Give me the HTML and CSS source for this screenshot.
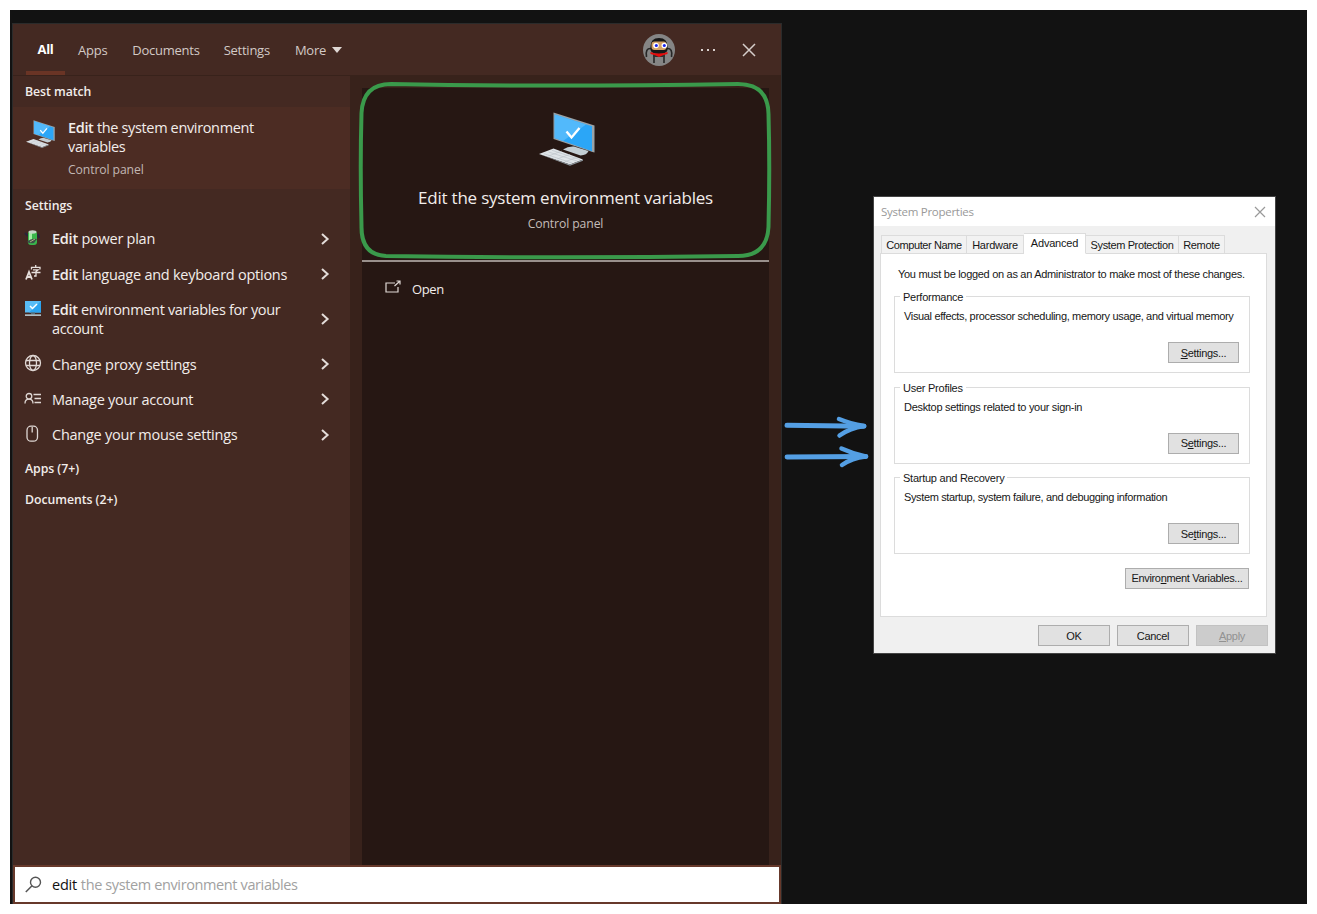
FILE: index.html
```html
<!DOCTYPE html>
<html lang="en">
<head>
<meta charset="utf-8">
<title>Edit the system environment variables</title>
<link rel="stylesheet" href="styles.css">
</head>
<body>
<svg class="defs" width="0" height="0">
  <symbol id="chev" viewBox="0 0 10 14"><path d="M2 2l5.600 5L2 12" fill="none" stroke="#e4dcd9" stroke-width="2"/></symbol>
  <symbol id="pc" viewBox="0 0 56 54">
    <path d="M14.500 0.500L55.500 13.500V40.500L53.500 40L14.500 27z" fill="#9aa3a8"/>
    <path d="M15.700 2.500L53 14.300V39.300L15.700 26z" fill="#2ba6f7"/>
    <path d="M15.700 2.500L47 12.400L24 28.900L15.700 26z" fill="#52b9fb"/>
    <path d="M27.500 19.500l5 6 8-9.500" fill="none" stroke="#fff" stroke-width="2.400"/>
    <path d="M24 37.500q5-3.500 11-3l14.500 4.500q-1.500 4-8 4.500z" fill="#c3ced4"/>
    <path d="M0 42l14.500-5.500L44 47.500 31 52.500z" fill="#dfe4e8"/>
    <path d="M5 41.700L33 51M9.500 40L38 49M13 38.300L41 47.700M9 44.200l13.500-5M18 47l13-4.700M26 49.700l12-4.400" fill="none" stroke="#b9c0c6" stroke-width=".6"/>
    <path d="M0 42l31 10.500 13-5v1.300L31 53.800z" fill="#8e979d"/>
  </symbol>
</svg>
<main class="canvas">
  <section class="search">
    <header class="tabs">
      <span class="tab on"><b>All</b></span><span class="tab">Apps</span><span class="tab docs">Documents</span><span class="tab sets">Settings</span><span class="tab more">More<i class="caret"></i></span>
      <svg class="avatar" viewBox="0 0 32 32"><circle cx="16" cy="16" r="16" fill="#858585"/>
        <path d="M8 14.500Q2 14 3.500 23M24 14.500q6-.5 4.500 8.500M11 22v7M21 22v7" fill="none" stroke="#262626" stroke-width="1.600"/>
        <path d="M10 20h12v3H10z" fill="#303030"/>
        <path d="M7.500 13Q7.500 4 16 4t8.500 9v3q-1 4-8.500 4t-8.500-4z" fill="#171717"/>
        <rect x="8.500" y="7.500" width="15" height="8.500" rx="3" fill="#d3a269"/>
        <circle cx="13" cy="11.500" r="2.800" fill="#fff"/><circle cx="21.300" cy="11.500" r="2.800" fill="#fff"/><circle cx="13.300" cy="11.500" r="1.500" fill="#1722ee"/><circle cx="21.300" cy="11.500" r="1.500" fill="#1722ee"/>
        <path d="M7.500 18q8.500 3 17 0v2q-5 1-8.500 3-3.500-2-8.500-3z" fill="#e60b0b"/></svg>
      <svg class="dots" viewBox="0 0 16 4"><path d="M1 1h2v2H1zM7 1h2v2H7zM13 1h2v2h-2z" fill="#d8d0cd"/></svg>
      <svg class="close" viewBox="0 0 14 14"><path d="M1 1l12 12M13 1L1 13" stroke="#d5cdca" stroke-width="1.500"/></svg>
    </header>
    <div class="body">
      <div class="results">
        <h2 class="first">Best match</h2>
        <div class="best">
          <svg class="bicon"><use href="#pc"/></svg>
          <div><p class="btitle"><b>Edit</b> the system environment<br>variables</p><p class="sub">Control panel</p></div>
        </div>
        <h2 class="second">Settings</h2>
        <div class="row"><svg class="ic" viewBox="0 0 18 18"><path d="M1 4l3 3M14 5l1 4" stroke="#29243b" stroke-width="2"/><rect x="4" y="2" width="9" height="14" rx="3" fill="#39b64b"/><rect x="5" y="3" width="3" height="9" fill="#a1eda2"/><ellipse cx="8.500" cy="3" rx="4" ry="1.700" fill="#c5d5c7"/><path d="M3 13q4-4 10-3l-3 4q-4 1-7-1z" fill="#3d5148"/><path d="M6 13l5-3" stroke="#b2ad80"/></svg><span><b>Edit</b> power plan</span><svg class="chev"><use href="#chev"/></svg></div>
        <div class="row"><svg class="ic" viewBox="0 0 18 18"><path d="M2 15.500L5 8 8 15.500M3 13h4" fill="none" stroke="#e6dfdc" stroke-width="1.800"/><path d="M7.500 5.500V3.300h8.500v2.200M11.700 1v2.300M9 5.800h5L12 7.500V12h-2M7.500 8.500h9" fill="none" stroke="#e6dfdc" stroke-width="1.300"/></svg><span><b>Edit</b> language and keyboard options</span><svg class="chev"><use href="#chev"/></svg></div>
        <div class="row two"><svg class="ic" viewBox="0 0 18 18"><path d="M1 1h16v11.500H1z" fill="#58bbf5"/><path d="M17 1v11.500H5z" fill="#2ba3ef"/><path d="M6 6l2.500 2.500L13 4" fill="none" stroke="#fff" stroke-width="1.500"/><path d="M7 12.500h4v2H7z" fill="#526c79"/><path d="M1 14.300h16v1.700H1z" fill="#afbcc2"/></svg><span class="e3"><b>Edit</b> environment variables for your<br>account</span><svg class="chev"><use href="#chev"/></svg></div>
        <div class="row"><svg class="ic ln" viewBox="0 0 18 18"><circle cx="9" cy="9" r="7.500"/><ellipse cx="9" cy="9" rx="3.500" ry="7.500"/><path d="M2 6.500h14M2 11.500h14"/></svg><span>Change proxy settings</span><svg class="chev"><use href="#chev"/></svg></div>
        <div class="row"><svg class="ic ln" viewBox="0 0 18 18"><circle cx="5" cy="6.300" r="2.800"/><path d="M1 13.500q0-4.300 4-4.300t4 4.300M9.500 4.500H17M10.500 8.500H17M10.500 12.500H17"/></svg><span>Manage your account</span><svg class="chev"><use href="#chev"/></svg></div>
        <div class="row"><svg class="ic ln" viewBox="0 0 18 18"><rect x="3" y="1.200" width="10.500" height="15" rx="4"/><path d="M8.200 2v5.500"/></svg><span>Change your mouse settings</span><svg class="chev"><use href="#chev"/></svg></div>
        <h2 class="more-h">Apps (7+)</h2>
        <h2 class="more-h">Documents (2+)</h2>
      </div>
      <div class="detail">
        <div class="hero">
          <svg class="hicon"><use href="#pc"/></svg>
          <p class="htitle">Edit the system environment variables</p>
          <p class="hsub">Control panel</p>
        </div>
        <div class="open"><svg viewBox="0 0 16 14"><path d="M10 3H1v9h12V7" fill="none" stroke="#e0d9d6" stroke-width="1.200"/><path d="M9.500 6L14.500 1.500M11.500 1H15v3.500" fill="none" stroke="#e0d9d6" stroke-width="1.200"/></svg><span>Open</span></div>
      </div>
    </div>
    <footer class="box"><svg viewBox="0 0 17 17"><circle cx="10.500" cy="6.200" r="5" fill="none" stroke="#555" stroke-width="1.400"/><path d="M7 9.800L.8 16" stroke="#555" stroke-width="1.500"/></svg><span class="typed">edit</span><span class="hint">the system environment variables</span></footer>
  </section>

  <section class="dialog">
    <header class="title"><span>System Properties</span><svg viewBox="0 0 12 12"><path d="M1 1l10 10M11 1L1 11" stroke="#999" stroke-width="1.200"/></svg></header>
    <nav class="dtabs"><span class="t1">Computer Name</span><span class="t2">Hardware</span><span class="t3">Advanced</span><span class="t4">System Protection</span><span class="t5">Remote</span></nav>
    <div class="page">
      <p class="note">You must be logged on as an Administrator to make most of these changes.</p>
      <div class="group"><span class="legend">Performance</span><p class="wide">Visual effects, processor scheduling, memory usage, and virtual memory</p><span class="btn"><u>S</u>ettings...</span></div>
      <div class="group"><span class="legend">User Profiles</span><p>Desktop settings related to your sign-in</p><span class="btn">S<u>e</u>ttings...</span></div>
      <div class="group"><span class="legend">Startup and Recovery</span><p class="g3">System startup, system failure, and debugging information</p><span class="btn">Se<u>t</u>tings...</span></div>
      <span class="btn env">Enviro<u>n</u>ment Variables...</span>
    </div>
    <div class="actions"><span class="btn">OK</span><span class="btn">Cancel</span><span class="btn off"><u>A</u>pply</span></div>
  </section>

  <svg class="ink" viewBox="0 0 1317 914">
    <g fill="none" stroke-linecap="round" stroke-linejoin="round">
      <path d="M391 84C490 86 610 86 738 84Q768 84 768.500 114Q770 166 768.500 227Q767 256 738 256Q560 258.500 386 256Q361 255 361.500 226Q360 166 361.500 113Q363 84 391 84z" stroke="#3a9a4b" stroke-width="4"/>
      <g stroke="#549fe4">
        <path d="M787 425.300L864 426.300" stroke-width="5"/><path d="M839 419q11 4.500 25 7Q850 428 839.500 435.500" stroke-width="4.500"/>
        <path d="M787 457L866 456.500" stroke-width="4.800"/><path d="M841.500 448.500q11 5 24 8Q852 458 842 465" stroke-width="4.500"/>
      </g>
      <path d="M844 420.500l18 6-18 6 6-5.500zM846 450.500l18 6-17 5.500 5-5.500z" fill="#549fe4"/>
    </g>
  </svg>
</main>
</body>
</html>
```
FILE: styles.css
```css
* { box-sizing: border-box; }
body { margin: 0; background: #fff; width: 1317px; height: 914px; overflow: hidden; padding: 10px; font-family: "Open Sans", "Noto Sans", sans-serif; }
p, h2 { margin: 0; }
b { font-weight: 600; }
svg { display: block; flex: none; }
.defs { position: absolute; }
.canvas { width: 1297px; height: 894px; background: #121212; }
.ink { position: absolute; left: 0; top: 0; width: 1317px; height: 914px; }

/* Start menu search window */
.search { position: absolute; left: 12px; top: 23px; width: 770px; height: 881px; border: 1px solid #2b2b2b; border-bottom: 0; background: #442922; color: #f2edeb; display: flex; flex-direction: column; }
.tabs { height: 52px; flex: none; display: flex; align-items: center; padding-left: 13px; font-size: 13px; color: #d3cac6; border-bottom: 1px solid #38221b; }
.tab { white-space: nowrap; letter-spacing: -.25px; }
.tab.on { width: 39px; height: 51px; margin-right: 13px; display: flex; align-items: center; justify-content: center; color: #fff; border-bottom: 4px solid #6a3425; padding-top: 3px; }
.tab.on b { font-weight: 700; }
.docs { margin-left: 25px; }
.sets { margin-left: 24px; }
.more { margin-left: 25px; display: flex; align-items: center; }
.caret { margin-left: 6px; border: 5px solid transparent; border-top: 6px solid #e0d8d5; border-bottom: 0; }
.avatar { width: 32px; height: 32px; margin-left: auto; margin-right: 25px; }
.dots { width: 16px; height: 4px; margin-right: 26px; }
.close { width: 14px; height: 14px; margin-right: 25px; }
.body { flex: 1; display: flex; min-height: 0; }
.results { width: 337px; flex: none; }
.results h2 { font-size: 12.300px; font-weight: 600; padding-left: 12px; letter-spacing: -.05px; }
.first { height: 31px; line-height: 31px; }
.second { height: 32px; line-height: 34px; }
.more-h { height: 31px; line-height: 33px; }
.best { height: 82px; background: #4c2c23; display: flex; padding: 11px 0 0 13px; }
.bicon { width: 29px; height: 28px; margin: 2px 13px 0 0; }
.btitle { font-size: 14.500px; line-height: 19px; letter-spacing: -.35px; white-space: nowrap; }
.sub { font-size: 12.200px; letter-spacing: -.1px; color: #c2b7b3; line-height: 18px; margin-top: 5px; }
.row { height: 35.300px; display: flex; align-items: center; padding: 1px 20px 0 11px; font-size: 14.500px; line-height: 19.500px; letter-spacing: -.25px; white-space: nowrap; }
.row.two { height: 54.700px; }
.e3 { letter-spacing: -.33px; }
.two .ic { align-self: flex-start; margin-top: 7px; }
.ic { width: 18px; height: 18px; margin: -2px 10px 0 0; }
.ln { fill: none; stroke: #dfd7d4; stroke-width: 1.300; }
.chev { width: 10px; height: 14px; margin: -1px 0 0 auto; }
.detail { flex: 1; background: linear-gradient(#261713, #261713) 12px 12px / 407px 100% no-repeat #38221b; padding: 0 12px; }
.hero { height: 186px; display: flex; flex-direction: column; align-items: center; border-bottom: 2px solid #99908c; }
.hicon { width: 56px; height: 54px; margin: 36px 0 0 2px; }
.htitle { font-size: 17px; letter-spacing: -.22px; line-height: 24px; margin-top: 20px; white-space: nowrap; }
.hsub { font-size: 12.200px; letter-spacing: -.1px; line-height: 18px; margin-top: 5px; color: #c4bcb9; }
.open { display: flex; padding: 17px 0 0 23px; font-size: 13px; line-height: 20px; letter-spacing: -.4px; }
.open svg { width: 16px; height: 14px; margin: 1px 11px 0 0; }
.box { height: 39px; flex: none; display: flex; align-items: center; background: #fff; border: 2px solid #67392b; padding: 0 0 1px 10px; font-size: 14.500px; letter-spacing: -.38px; white-space: nowrap; }
.box svg { width: 17px; height: 17px; margin-right: 10px; }
.typed { color: #111; margin-right: 4px; letter-spacing: -.25px; }
.hint { color: #a1a1a1; }

/* System Properties dialog */
.dialog { position: absolute; left: 873px; top: 196px; width: 403px; height: 458px; border: 1px solid #444; background: #f0f0f0; color: #171717; font: 11px/14px "Liberation Sans", Arial, sans-serif; white-space: nowrap; letter-spacing: -.3px; }
.title { height: 29px; background: #fff; display: flex; justify-content: space-between; align-items: center; padding: 0 9px 0 7px; color: #999; font: 11.500px "Open Sans", sans-serif; }
.title span { letter-spacing: -.28px; }
.title svg { width: 12px; height: 12px; }
.dtabs { display: flex; align-items: flex-end; height: 28px; padding-left: 7px; margin-bottom: -1px; position: relative; }
.dtabs span { height: 19px; border: 1px solid #dcdcdc; border-left-width: 0; display: flex; align-items: center; justify-content: center; background: #f2f2f2; letter-spacing: -.4px; }
.dtabs .t1 { width: 86px; border-left-width: 1px; }
.dtabs .t2 { width: 57px; letter-spacing: -.25px; }
.dtabs .t3 { width: 62px; height: 21px; background: #fff; border-bottom-color: #fff; padding-bottom: 2px; letter-spacing: -.2px; }
.dtabs .t4 { width: 93px; letter-spacing: -.38px; }
.dtabs .t5 { width: 46px; letter-spacing: -.3px; }
.page { margin-left: 6px; width: 387px; height: 364px; background: #fff; border: 1px solid #dcdcdc; padding: 13px 16px 0 13px; display: flex; flex-direction: column; }
.note { padding-left: 4px; margin-bottom: 15px; }
.group { height: 77px; margin-bottom: 13.500px; border: 1px solid #dcdcdc; display: flex; flex-direction: column; flex: none; }
.legend { align-self: flex-start; margin: -7px 0 0 5px; padding: 0 3px; background: #fff; letter-spacing: -.25px; }
.group p { padding: 5px 0 0 9px; }
.group .wide { letter-spacing: -.345px; }
.group .g3 { letter-spacing: -.36px; }
.btn { width: 71px; height: 21px; border: 1px solid #adadad; background: #e1e1e1; display: flex; align-items: center; justify-content: center; flex: none; }
.group .btn { margin: 19px 10px 0 auto; }
.env { width: 124px; align-self: flex-end; margin-right: 1px; letter-spacing: -.33px; }
.actions { display: flex; justify-content: flex-end; gap: 7px; padding: 8px 7px 0 0; }
.actions .btn { width: 72px; }
.actions .off { background: #ccc; border-color: #c2c2c2; color: #929292; }
u { text-underline-offset: 1px; }
```
